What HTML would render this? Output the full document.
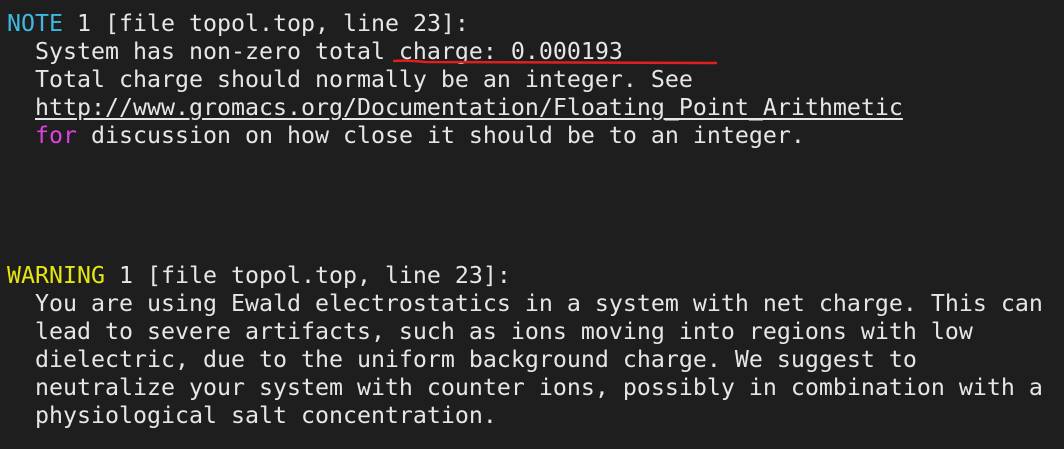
<!DOCTYPE html>
<html><head><style>
html,body{margin:0;padding:0;background:#1e1e1e;width:1064px;height:449px;overflow:hidden}
pre{margin:0;position:absolute;left:7px;top:10px;font-family:"DejaVu Sans Mono","Liberation Mono",monospace;font-size:23.25px;line-height:28px;color:#e6e6e6;white-space:pre}
.c{color:#3fb8e0}.y{color:#e5e510}.m{color:#e040e0}.u{text-decoration:underline;text-underline-offset:3px}
</style></head><body>
<pre><span class="c">NOTE</span> 1 [file topol.top, line 23]:
  System has non-zero total charge: 0.000193
  Total charge should normally be an integer. See
  <span class="u">http://www.gromacs.org/Documentation/Floating_Point_Arithmetic</span>
  <span class="m">for</span> discussion on how close it should be to an integer.




<span class="y">WARNING</span> 1 [file topol.top, line 23]:
  You are using Ewald electrostatics in a system with net charge. This can
  lead to severe artifacts, such as ions moving into regions with low
  dielectric, due to the uniform background charge. We suggest to
  neutralize your system with counter ions, possibly in combination with a
  physiological salt concentration.</pre>
<svg style="position:absolute;left:0;top:0" width="1064" height="449"><path d="M393 61 Q410 60 425 62 L717 63" stroke="#e02020" stroke-width="2.5" fill="none"/></svg>
</body></html>
